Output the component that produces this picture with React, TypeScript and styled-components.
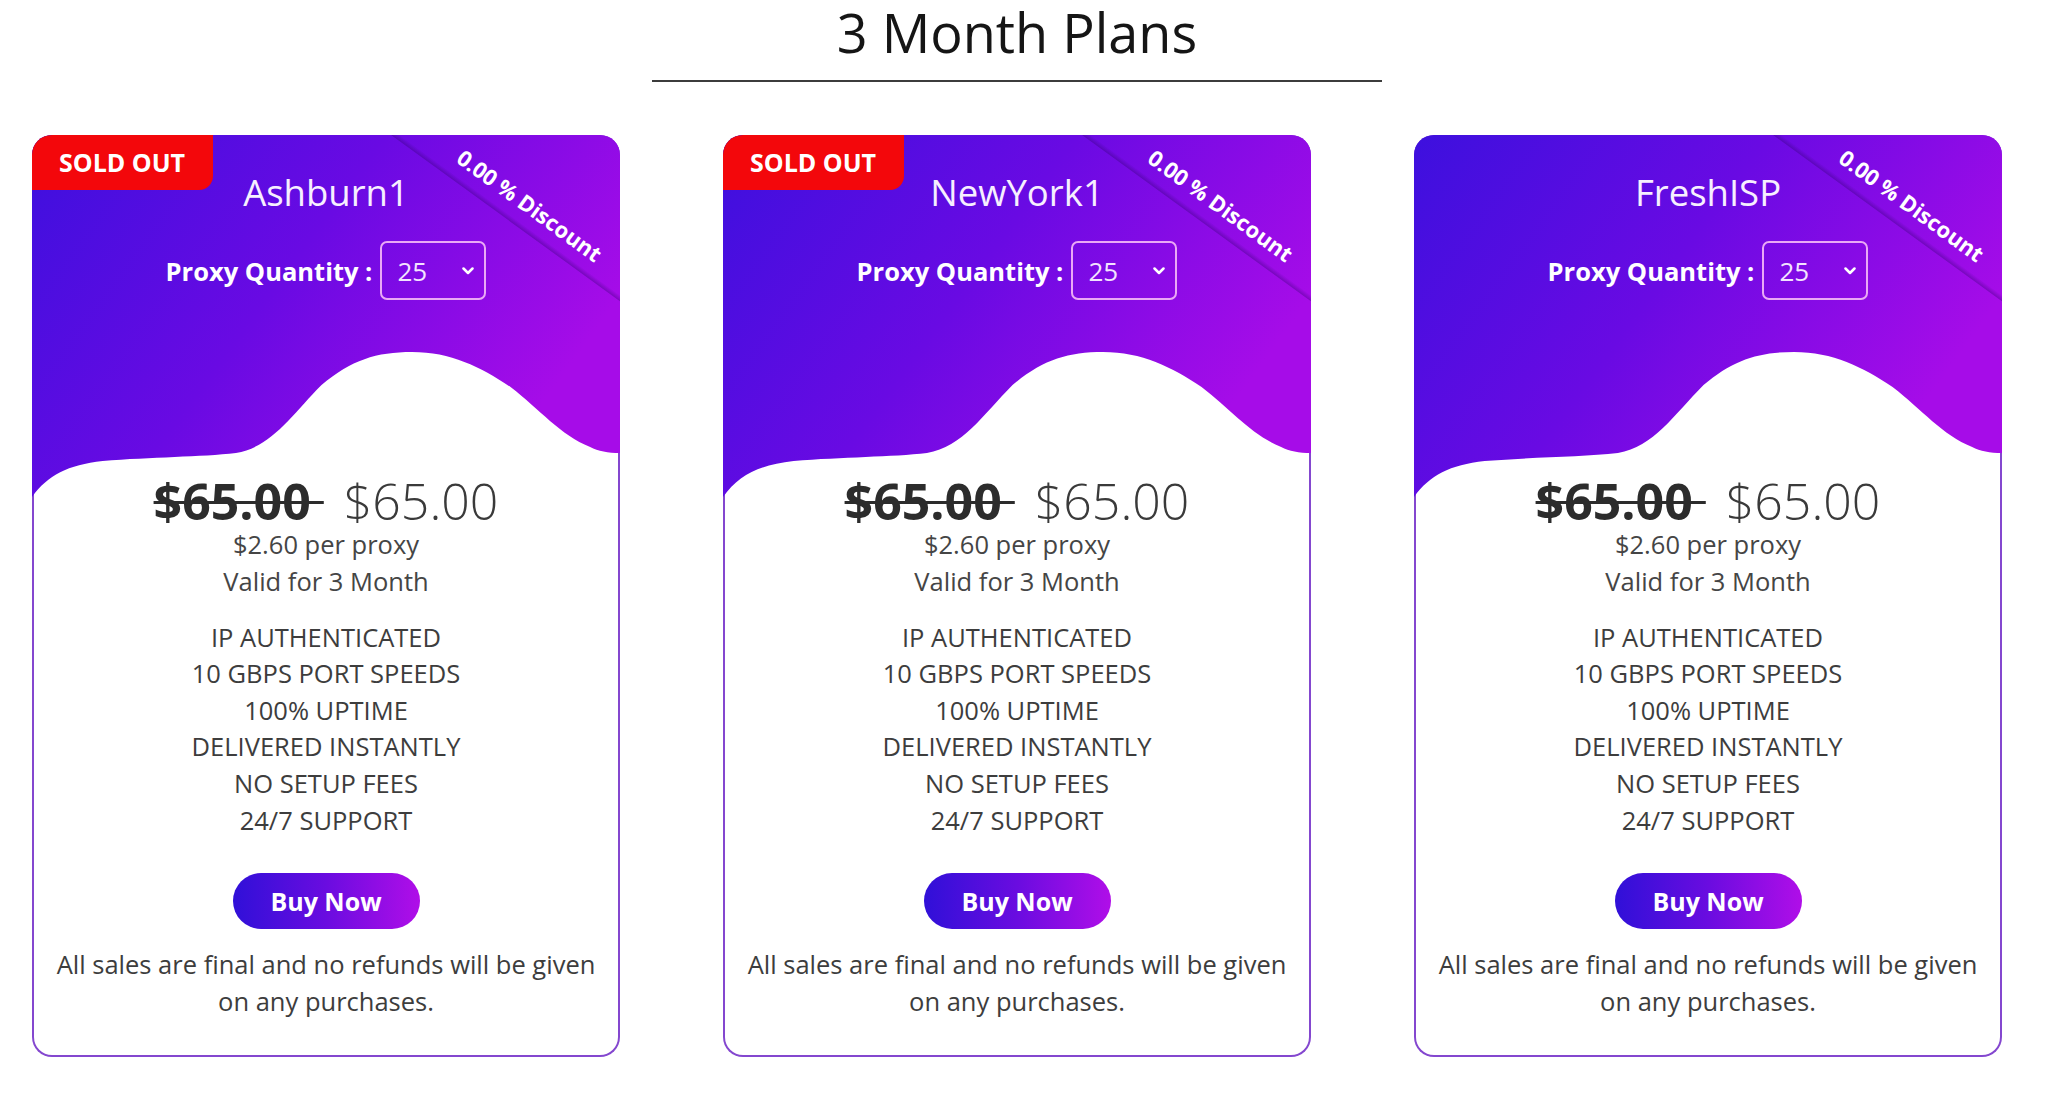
import React from 'react';
import styled, { createGlobalStyle } from 'styled-components';

const GlobalStyle = createGlobalStyle`
  body {
    margin: 0;
    background: #fff;
    font-family: 'Open Sans', sans-serif;
  }
`;

const Page = styled.div`
  width: 2034px;
  height: 1097px;
  overflow: hidden;
`;

const Heading = styled.h1`
  margin: 0;
  text-align: center;
  font-size: 54px;
  font-weight: 400;
  line-height: 64px;
  color: #151515;
`;

const Rule = styled.div`
  width: 730px;
  height: 2px;
  margin: 16px auto 0;
  background: #3c3c3c;
`;

const Grid = styled.div`
  display: grid;
  grid-template-columns: repeat(3, 588px);
  justify-content: center;
  column-gap: 103px;
  margin-top: 53px;
`;

const Card = styled.div`
  position: relative;
  height: 922px;
  border-radius: 20px;
  overflow: hidden;
  background: #fff;
  box-shadow: inset 0 0 0 2px #8447cf;
`;

const Art = styled.svg`
  position: absolute;
  top: 0;
  left: 0;
  width: 100%;
  height: 380px;
`;

const SoldOut = styled.div`
  position: absolute;
  top: 0;
  left: 0;
  z-index: 2;
  height: 55px;
  padding: 0 28px 0 27px;
  line-height: 55px;
  background: #f3070b;
  border-bottom-right-radius: 14px;
  color: #fff;
  font-size: 25px;
  font-weight: 700;
`;

const Ribbon = styled.div`
  position: absolute;
  left: 298px;
  top: 45px;
  z-index: 2;
  width: 400px;
  height: 50px;
  display: flex;
  align-items: center;
  justify-content: center;
  transform: rotate(36deg);
  background: linear-gradient(to top, rgba(45, 0, 105, 0.35) 0, rgba(45, 0, 105, 0) 5px);
  color: #fff;
  font-size: 22px;
  font-weight: 700;
`;

const Header = styled.div`
  position: relative;
  z-index: 1;
  height: 341px;
  box-sizing: border-box;
  padding-top: 34px;
  display: flex;
  flex-direction: column;
  align-items: center;
`;

const Name = styled.div`
  font-size: 36.5px;
  line-height: 47px;
  color: #f7efff;
`;

const QtyRow = styled.div`
  margin-top: 25px;
  display: flex;
  align-items: center;
  gap: 8px;
`;

const QtyLabel = styled.span`
  font-size: 25.5px;
  font-weight: 700;
  color: #fff;
`;

const QtySelect = styled.div`
  width: 106px;
  height: 59px;
  box-sizing: border-box;
  padding: 0 10px 0 15px;
  display: flex;
  align-items: center;
  justify-content: space-between;
  border: 2px solid #eaa9f5;
  border-radius: 7px;
  font-size: 26px;
  color: #f3e3ff;
`;

const Body = styled.div`
  position: relative;
  z-index: 1;
  padding: 0 20px;
  text-align: center;
  color: #3d3d3d;
`;

const PriceRow = styled.div`
  font-size: 50px;
  line-height: 50px;
`;

const OldPrice = styled.span`
  margin-right: 20px;
  font-weight: 700;
  color: #2c2c2c;
  text-decoration: line-through;
  text-decoration-thickness: 3px;
`;

const NewPrice = styled.span`
  font-weight: 300;
  color: #3a3a3a;
`;

const Line = styled.div`
  font-size: 25.5px;
  line-height: 36.6px;
  color: #454545;
`;

const Features = styled.ul`
  margin: 19.5px 0 0;
  padding: 0;
  list-style: none;
  font-size: 25.5px;
  line-height: 36.6px;
  color: #3d3d3d;
`;

const BuyButton = styled.button`
  display: block;
  margin: 35px auto 0;
  width: 187px;
  height: 56px;
  border: none;
  border-radius: 28px;
  background: linear-gradient(90deg, #3010d8 0%, #6a0ce0 50%, #b00ee8 100%);
  color: #fff;
  font-family: 'Open Sans', sans-serif;
  font-size: 25px;
  font-weight: 700;
  cursor: pointer;
`;

const Note = styled.p`
  margin: 17px 0 0;
  font-size: 25.5px;
  line-height: 36.6px;
  color: #3d3d3d;
`;

const features = [
  'IP AUTHENTICATED',
  '10 GBPS PORT SPEEDS',
  '100% UPTIME',
  'DELIVERED INSTANTLY',
  'NO SETUP FEES',
  '24/7 SUPPORT',
];

const plans = [
  { name: 'Ashburn1', soldOut: true },
  { name: 'NewYork1', soldOut: true },
  { name: 'FreshISP', soldOut: false },
];

function Plan({ name, soldOut, idx }: { name: string; soldOut: boolean; idx: number }) {
  const gid = `plan-grad-${idx}`;
  return (
    <Card>
      <Art viewBox="0 0 591 380" preserveAspectRatio="none">
        <defs>
          <linearGradient id={gid} x1="0" y1="0" x2="1" y2="0.45">
            <stop offset="0" stopColor="#3d10de" />
            <stop offset="0.5" stopColor="#690ae3" />
            <stop offset="1" stopColor="#a60ce8" />
          </linearGradient>
        </defs>
        <path
          fill={`url(#${gid})`}
          d="M0,0 H591 V318 C579,318 569,316 561,312 C531,300 511,275 481,252 C451,232 421,217 382,217 C346,217 321,225 291,250 C261,280 241,312 205,318 C170,322 120,322 71,326 C36,330 16,340 0,362 Z"
        />
      </Art>
      {soldOut && <SoldOut>SOLD OUT</SoldOut>}
      <Ribbon>0.00 % Discount</Ribbon>
      <Header>
        <Name>{name}</Name>
        <QtyRow>
          <QtyLabel>Proxy Quantity :</QtyLabel>
          <QtySelect>
            <span>25</span>
            <svg width="12" height="8" viewBox="0 0 12 8">
              <polyline points="1.5,1.5 6,6 10.5,1.5" fill="none" stroke="#fff" strokeWidth="2.5" strokeLinecap="round" strokeLinejoin="round" />
            </svg>
          </QtySelect>
        </QtyRow>
      </Header>
      <Body>
        <PriceRow>
          <OldPrice>$65.00 </OldPrice>
          <NewPrice>$65.00</NewPrice>
        </PriceRow>
        <Line>$2.60 per proxy</Line>
        <Line>Valid for 3 Month</Line>
        <Features>
          {features.map((f) => (
            <li key={f}>{f}</li>
          ))}
        </Features>
        <BuyButton>Buy Now</BuyButton>
        <Note>All sales are final and no refunds will be given on any purchases.</Note>
      </Body>
    </Card>
  );
}

export default function App() {
  return (
    <Page>
      <GlobalStyle />
      <Heading>3 Month Plans</Heading>
      <Rule />
      <Grid>
        {plans.map((p, i) => (
          <Plan key={p.name} name={p.name} soldOut={p.soldOut} idx={i} />
        ))}
      </Grid>
    </Page>
  );
}
